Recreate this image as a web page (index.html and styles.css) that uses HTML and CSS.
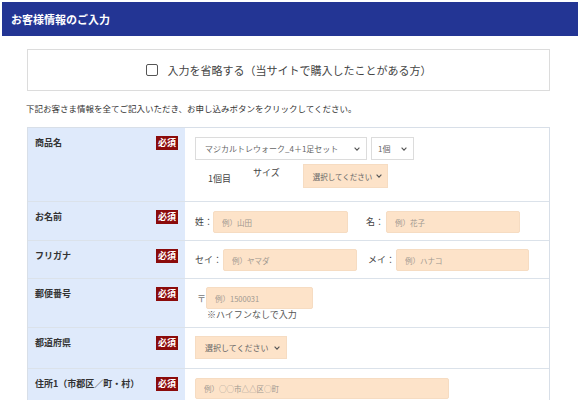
FILE: index.html
```html
<!DOCTYPE html>
<html lang="ja">
<head>
<meta charset="utf-8">
<title>お客様情報のご入力</title>
<link rel="stylesheet" href="styles.css">
</head>
<body>
<div class="page">
  <div class="head">お客様情報のご入力</div>

  <div class="skip">
    <span class="cbox"></span>
    <span class="skip-text">入力を省略する（当サイトで購入したことがある方）</span>
  </div>

  <p class="note">下記お客さま情報を全てご記入いただき、お申し込みボタンをクリックしてください。</p>

  <div class="form">
    <div class="row">
      <div class="lab"><span class="lab-text">商品名</span><span class="req">必須</span></div>
      <div class="fld fld-prod">
        <div class="line">
          <div class="sel sel-prod"><span>マジカルトレウォーク_4＋1足セット</span><svg class="chev" viewBox="0 0 6 4"><path d="M0.6 0.6 L3 3.2 L5.4 0.6"/></svg></div>
          <div class="sel sel-qty"><span>1個</span><svg class="chev" viewBox="0 0 6 4"><path d="M0.6 0.6 L3 3.2 L5.4 0.6"/></svg></div>
        </div>
        <div class="line line2">
          <span class="nth">1個目</span>
          <span class="size">サイズ</span>
          <div class="sel sel-size peach"><span>選択してください</span><svg class="chev" viewBox="0 0 6 4"><path d="M0.6 0.6 L3 3.2 L5.4 0.6"/></svg></div>
        </div>
      </div>
    </div>

    <div class="row">
      <div class="lab"><span class="lab-text">お名前</span><span class="req">必須</span></div>
      <div class="fld fld-pair p9">
        <span class="pre">姓：</span><input class="inp w135" placeholder="例）山田">
        <span class="pre pre2">名：</span><input class="inp w134 ml2" placeholder="例）花子">
      </div>
    </div>

    <div class="row">
      <div class="lab"><span class="lab-text">フリガナ</span><span class="req">必須</span></div>
      <div class="fld fld-pair p8">
        <span class="pre">セイ：</span><input class="inp w134 ml1" placeholder="例）ヤマダ">
        <span class="pre pre3">メイ：</span><input class="inp w133 ml1" placeholder="例）ハナコ">
      </div>
    </div>

    <div class="row">
      <div class="lab"><span class="lab-text">郵便番号</span><span class="req">必須</span></div>
      <div class="fld fld-zip">
        <div class="zip-line"><span class="zip-mark">〒</span><input class="inp w107" placeholder="例）1500031"></div>
        <div class="hint">※ハイフンなしで入力</div>
      </div>
    </div>

    <div class="row">
      <div class="lab"><span class="lab-text">都道府県</span><span class="req">必須</span></div>
      <div class="fld fld-pref">
        <div class="sel sel-pref peach"><span>選択してください</span><svg class="chev" viewBox="0 0 6 4"><path d="M0.6 0.6 L3 3.2 L5.4 0.6"/></svg></div>
      </div>
    </div>

    <div class="row">
      <div class="lab"><span class="lab-text">住所1（市郡区／町・村）</span><span class="req">必須</span></div>
      <div class="fld fld-addr">
        <input class="inp w254" placeholder="例）○○市△△区○町">
      </div>
    </div>
  </div>
</div>
</body>
</html>
```

FILE: styles.css
```css
* { box-sizing: border-box; }
html, body { margin: 0; padding: 0; background: #fff; }
body {
  font-family: "Noto Sans CJK JP", "Noto Sans", sans-serif;
  color: #333;
  overflow: hidden;
}
.page { padding: 2px 2px 0 2px; }
.head {
  height: 34px;
  background: #233594;
  color: #fff;
  font-weight: bold;
  font-size: 11px;
  line-height: 34px;
  padding-left: 9px;
}
.skip {
  margin: 13px 28px 0 25px;
  height: 42px;
  border: 1px solid #dcdcdc;
  display: flex;
  align-items: center;
  justify-content: center;
  gap: 10px;
}
.cbox {
  width: 12px;
  height: 12px;
  border: 1.3px solid #555;
  border-radius: 2px;
  background: #fff;
}
.skip-text {
  font-size: 11px;
  color: #444;
  line-height: 14px;
}
.note {
  margin: 11px 0 0 24px;
  font-size: 8.5px;
  line-height: 12px;
  color: #333;
}
.form {
  margin: 13px 28px 0 25px;
  border-top: 1px solid #d8dfe8;
  border-left: 1px solid #d8dfe8;
  border-right: 1px solid #d8dfe8;
}
.row {
  display: grid;
  grid-template-columns: 157px 1fr;
  border-bottom: 1px solid #dbe2ea;
}
.lab {
  background: #dfeafb;
  display: flex;
  justify-content: space-between;
  align-items: flex-start;
  padding: 8px 7px 0 7px;
}
.lab-text {
  font-size: 9px;
  font-weight: bold;
  line-height: 14px;
  color: #333;
}
.req {
  width: 22px;
  height: 14px;
  background: #8b0b0b;
  color: #fff;
  font-size: 9px;
  font-weight: bold;
  line-height: 14px;
  text-align: center;
}
.fld { padding-left: 10px; font-size: 9px; color: #444; }
.fld-prod { padding-top: 9px; padding-bottom: 13px; }
.line { display: flex; }
.line2 { margin-top: 4px; height: 24px; }
.sel {
  display: flex;
  align-items: center;
  justify-content: space-between;
  border: 1px solid #dcdcdc;
  background: #fff;
  font-size: 8px;
  color: #666;
  padding: 0 6px 0 9px;
  height: 23px;
  white-space: nowrap;
}
.sel.peach { background: #fde3c9; border-color: #f6dcc2; }
.chev { width: 6px; height: 4px; fill: none; stroke: #555; stroke-width: 1.1; flex: none; }
.sel-prod { width: 172px; }
.sel-qty { width: 43px; margin-left: 4px; padding-left: 6px; }
.nth { align-self: flex-end; margin: 0 0 2px 13px; line-height: 14px; }
.size { align-self: flex-start; margin: 2px 0 0 22px; line-height: 14px; }
.sel-size { width: 85px; height: 24px; margin-left: 23px; padding: 0 5px 0 9px; font-size: 7.5px; }
.fld-pair { display: flex; align-items: center; padding-bottom: 7px; }
.p9 { padding-top: 9px; }
.p8 { padding-top: 8px; }
.pre { line-height: 14px; white-space: nowrap; }
.pre2 { margin-left: 18px; }
.pre3 { margin-left: 11px; }
.inp {
  height: 22px;
  border: 1px solid #f6dcc2;
  background: #fde3c9;
  border-radius: 2px;
  font-family: "Noto Sans CJK JP", "Noto Sans", sans-serif;
  font-size: 7.5px;
  padding: 0 8px;
  outline: none;
  color: #444;
}
.inp::placeholder { color: #a09890; }
.w135 { width: 135px; }
.w134 { width: 134px; }
.w133 { width: 133px; }
.w107 { width: 107px; }
.w254 { width: 254px; }
.ml1 { margin-left: 1px; }
.ml2 { margin-left: 2px; }
.fld-zip { padding-top: 8px; padding-bottom: 6px; }
.zip-line { display: flex; align-items: center; }
.zip-mark { width: 11px; padding-left: 2px; color: #777; font-size: 9px; }
.hint { margin-left: 12px; line-height: 12px; font-size: 9px; color: #555; }
.fld-pref { padding-top: 8px; padding-bottom: 9px; }
.sel-pref { width: 92px; padding-left: 9px; }
.fld-addr { padding-top: 9px; padding-bottom: 6px; }
.fld-addr .inp { height: 21px; }
```
